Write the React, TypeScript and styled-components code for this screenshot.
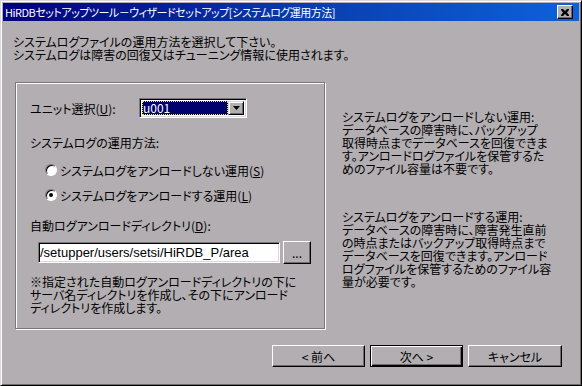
import { createGlobalStyle, styled } from "styled-components";

const FACE = "#b2aeb2";

const GlobalStyle = createGlobalStyle`
  html, body {
    margin: 0;
    padding: 0;
    background: ${FACE};
  }
  body {
    font-family: "Noto Sans CJK JP", "Liberation Sans", sans-serif;
    font-size: 12px;
    color: #000;
    font-feature-settings: "palt";
  }
`;

const Window = styled.div`
  width: 582px;
  height: 386px;
  box-sizing: border-box;
  display: flex;
  flex-direction: column;
  background: ${FACE};
  border: 1px solid;
  border-color: #dcd8dc #000 #000 #dcd8dc;
  box-shadow: inset 1px 1px #fff, inset -1px -1px #6e6a6e;
  padding: 2px;
`;

const TitleBar = styled.div`
  height: 18px;
  display: flex;
  align-items: center;
  padding: 0 6px 0 2px;
  background: linear-gradient(90deg, #00007b 0%, #0a3fb0 55%, #0c62dc 100%);
  color: #fff;
  line-height: 18px;
  white-space: nowrap;
`;

const TitleText = styled.span`
  flex: 1;
  font-size: 11px;
  letter-spacing: -0.5px;
`;

const CloseButton = styled.div`
  width: 16px;
  height: 14px;
  box-sizing: border-box;
  display: flex;
  align-items: center;
  justify-content: center;
  background: ${FACE};
  border: 1px solid;
  border-color: #fff #000 #000 #fff;
  box-shadow: inset -1px -1px #6e6a6e;
`;

const Body = styled.div`
  flex: 1;
  display: flex;
  flex-direction: column;
`;

const Intro = styled.div`
  padding: 14px 0 0 10px;
  line-height: 13px;
  white-space: nowrap;
`;

const MainRow = styled.div`
  display: flex;
  align-items: flex-start;
  margin-top: 21px;
  padding-left: 12px;
`;

const GroupBox = styled.div`
  width: 310px;
  height: 247px;
  box-sizing: border-box;
  border: 1px solid #7a767a;
  box-shadow: inset 1px 1px #fff, 1px 1px #fff;
  padding: 15px 0 0 14px;
  display: flex;
  flex-direction: column;
`;

const UnitRow = styled.div`
  display: flex;
  align-items: center;
  height: 20px;
`;

const UnitLabel = styled.span`
  width: 109px;
  white-space: nowrap;
`;

const Combo = styled.div`
  width: 108px;
  height: 20px;
  box-sizing: border-box;
  display: flex;
  background: #fff;
  border: 1px solid;
  border-color: #7a767a #fff #fff #7a767a;
  box-shadow: inset 1px 1px #000, inset -1px -1px #dcd8dc;
  padding: 2px;
`;

const ComboValue = styled.div`
  flex: 1;
  background: #00006e;
  color: #fff;
  outline: 1px dotted #e8e070;
  outline-offset: -1px;
  line-height: 14px;
  padding-left: 1px;
`;

const ComboArrow = styled.div`
  width: 16px;
  box-sizing: border-box;
  display: flex;
  align-items: center;
  justify-content: center;
  background: ${FACE};
  border: 1px solid;
  border-color: #dcd8dc #000 #000 #dcd8dc;
  box-shadow: inset 1px 1px #fff, inset -1px -1px #6e6a6e;
`;

const Label = styled.div<{ $top: number }>`
  margin-top: ${(p) => p.$top}px;
  line-height: 13px;
  white-space: nowrap;
`;

const RadioRow = styled.div<{ $top: number }>`
  display: flex;
  align-items: center;
  height: 16px;
  margin-top: ${(p) => p.$top}px;
  padding-left: 15px;
  white-space: nowrap;
`;

const Radio = styled.span<{ $checked?: boolean }>`
  position: relative;
  width: 12px;
  height: 12px;
  box-sizing: border-box;
  margin-right: 3px;
  border-radius: 50%;
  background: #fff;
  border: 1px solid;
  border-color: #7a767a #fff #fff #7a767a;
  box-shadow: inset 1px 1px #000;

  &::after {
    content: "";
    display: ${(p) => (p.$checked ? "block" : "none")};
    position: absolute;
    left: 3px;
    top: 3px;
    width: 4px;
    height: 4px;
    border-radius: 50%;
    background: #000;
  }
`;

const PathRow = styled.div`
  display: flex;
  align-items: center;
  gap: 3px;
  margin-top: 9px;
  padding-left: 8px;
`;

const TextInput = styled.div`
  width: 242px;
  height: 21px;
  box-sizing: border-box;
  background: #fff;
  border: 1px solid;
  border-color: #7a767a #fff #fff #7a767a;
  box-shadow: inset 1px 1px #000, inset -1px -1px #dcd8dc;
  padding: 0 1px;
  line-height: 19px;
  font-family: "Liberation Sans", "Noto Sans CJK JP", sans-serif;
  font-size: 13px;
  white-space: nowrap;
`;

const Button = styled.div<{ $w: number; $h: number; $default?: boolean }>`
  width: ${(p) => p.$w}px;
  height: ${(p) => p.$h}px;
  box-sizing: border-box;
  display: flex;
  align-items: center;
  justify-content: center;
  background: ${FACE};
  border: 1px solid;
  border-color: ${(p) => (p.$default ? "#000" : "#fff #000 #000 #fff")};
  box-shadow: ${(p) =>
    p.$default
      ? "inset 1px 1px #fff, inset -1px -1px #000, inset -2px -2px #6e6a6e"
      : "inset -1px -1px #6e6a6e"};
  white-space: nowrap;
`;

const Note = styled.div`
  margin-top: 11px;
  line-height: 13px;
  white-space: nowrap;
`;

const Side = styled.div`
  margin-left: 17px;
  padding-top: 28px;
  display: flex;
  flex-direction: column;
  gap: 35px;
  line-height: 13px;
  white-space: nowrap;
`;

const ButtonRow = styled.div`
  margin-top: auto;
  display: flex;
  justify-content: flex-end;
  gap: 5px;
  padding: 0 17px 16px 0;
`;

const Key = styled.span`
  text-decoration: underline;
`;

function CloseIcon() {
  return (
    <svg width="8" height="7" viewBox="0 0 8 7">
      <path
        d="M0 0h2l2 2 2-2h2v1L6 3.5 8 6v1H6L4 5 2 7H0V6l2-2.5L0 1z"
        fill="#000"
      />
    </svg>
  );
}

function DownArrow() {
  return (
    <svg width="7" height="4" viewBox="0 0 7 4">
      <path d="M0 0h7L3.5 4z" fill="#000" />
    </svg>
  );
}

export default function App() {
  return (
    <>
      <GlobalStyle />
      <Window>
        <TitleBar>
          <TitleText>
            HiRDBセットアップツール－ウィザードセットアップ[システムログ運用方法]
          </TitleText>
          <CloseButton>
            <CloseIcon />
          </CloseButton>
        </TitleBar>
        <Body>
          <Intro>
            システムログファイルの運用方法を選択して下さい。
            <br />
            システムログは障害の回復又はチューニング情報に使用されます。
          </Intro>
          <MainRow>
            <GroupBox>
              <UnitRow>
                <UnitLabel>
                  ユニット選択(<Key>U</Key>):
                </UnitLabel>
                <Combo>
                  <ComboValue>u001</ComboValue>
                  <ComboArrow>
                    <DownArrow />
                  </ComboArrow>
                </Combo>
              </UnitRow>
              <Label $top={18}>システムログの運用方法:</Label>
              <RadioRow $top={13}>
                <Radio />
                システムログをアンロードしない運用(<Key>S</Key>)
              </RadioRow>
              <RadioRow $top={9}>
                <Radio $checked />
                システムログをアンロードする運用(<Key>L</Key>)
              </RadioRow>
              <Label $top={16}>
                自動ログアンロードディレクトリ(<Key>D</Key>):
              </Label>
              <PathRow>
                <TextInput>/setupper/users/setsi/HiRDB_P/area</TextInput>
                <Button $w={28} $h={23}>
                  ...
                </Button>
              </PathRow>
              <Note>
                ※指定された自動ログアンロードディレクトリの下に
                <br />
                サーバ名ディレクトリを作成し、その下にアンロード
                <br />
                ディレクトリを作成します。
              </Note>
            </GroupBox>
            <Side>
              <div>
                システムログをアンロードしない運用:
                <br />
                データベースの障害時に、バックアップ
                <br />
                取得時点までデータベースを回復できま
                <br />
                す。アンロードログファイルを保管するた
                <br />
                めのファイル容量は不要です。
              </div>
              <div>
                システムログをアンロードする運用:
                <br />
                データベースの障害時に、障害発生直前
                <br />
                の時点またはバックアップ取得時点まで
                <br />
                データベースを回復できます。アンロード
                <br />
                ログファイルを保管するためのファイル容
                <br />
                量が必要です。
              </div>
            </Side>
          </MainRow>
          <ButtonRow>
            <Button $w={93} $h={22}>
              &lt; 前へ
            </Button>
            <Button $w={93} $h={22} $default>
              次へ &gt;
            </Button>
            <Button $w={94} $h={22}>
              キャンセル
            </Button>
          </ButtonRow>
        </Body>
      </Window>
    </>
  );
}
